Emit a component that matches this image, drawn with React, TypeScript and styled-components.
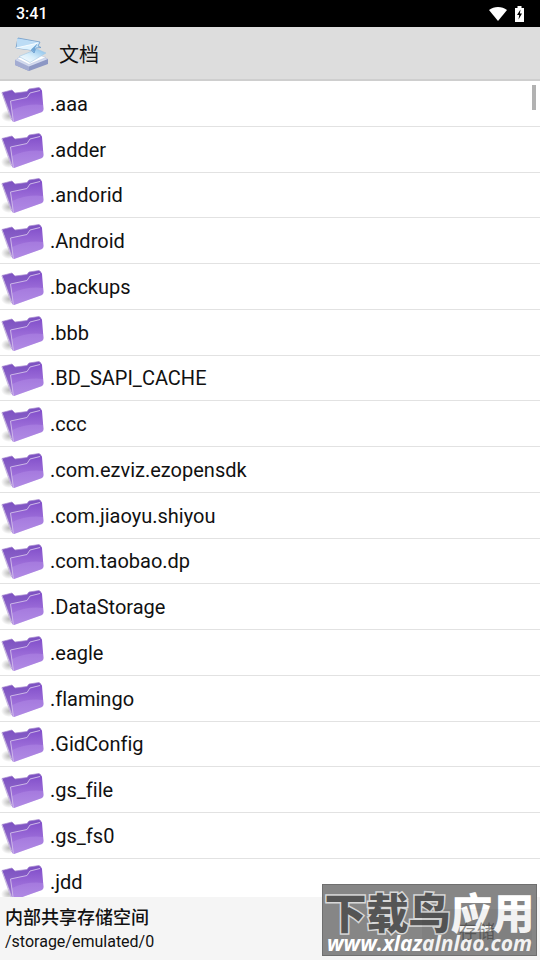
import React from "react";
import styled, { createGlobalStyle } from "styled-components";

const GlobalStyle = createGlobalStyle`
  * { box-sizing: border-box; }
  body {
    margin: 0;
    background: #fff;
    color: #111;
    font-family: Roboto, "Noto Sans CJK SC", sans-serif;
    font-variant-ligatures: none;
  }
`;

const Screen = styled.div`
  position: relative;
  display: flex;
  flex-direction: column;
  height: 100vh;
  overflow: hidden;
`;

const StatusBar = styled.div`
  display: flex;
  flex: none;
  align-items: center;
  height: 27px;
  padding: 0 16px;
  background: #000;
  color: #fff;
  font-size: 16px;
  font-weight: 500;
`;

const StatusIcons = styled.div`
  display: flex;
  align-items: center;
  gap: 8px;
  margin-left: auto;
  svg { display: block; }
`;

const TitleBar = styled.header`
  display: flex;
  flex: none;
  align-items: center;
  gap: 10px;
  height: 54px;
  padding: 0 13px;
  background: #dddddd;
  border-bottom: 2px solid #cecece;
`;

const Title = styled.h1`
  margin: 0;
  padding-top: 4px;
  font-size: 20px;
  line-height: 28px;
  font-weight: 400;
`;

const ListArea = styled.main`
  position: relative;
  flex: 1;
  min-height: 0;
  overflow: hidden;
`;

const FolderList = styled.ul`
  margin: 0;
  padding: 0;
  list-style: none;
`;

const FolderRow = styled.li`
  height: 46px;
  border-bottom: 1px solid #e2e2e2;
  &:nth-child(4n + 3) { height: 45px; }
`;

const FolderButton = styled.button`
  display: flex;
  align-items: center;
  gap: 4px;
  width: 100%;
  height: 100%;
  padding: 0;
  border: 0;
  background: none;
  color: inherit;
  font: inherit;
  font-size: 20px;
  font-variant-ligatures: none;
  line-height: 24px;
  text-align: left;
  svg { flex: none; }
`;

const ScrollThumb = styled.div`
  position: absolute;
  top: 4px;
  right: 4px;
  width: 4px;
  height: 25px;
  background: #b2b2b2;
`;

const Footer = styled.footer`
  display: flex;
  flex: none;
  align-items: center;
  justify-content: space-between;
  height: 63px;
  padding: 3px 8px 0 5px;
  background: #f5f5f5;
`;

const StorageName = styled.div`
  font-size: 18px;
  line-height: 24px;
  font-weight: 500;
`;

const StoragePath = styled.div`
  font-size: 16px;
  line-height: 24px;
`;

const SaveButton = styled.button`
  position: relative;
  z-index: 1;
  width: 110px;
  height: 42px;
  border: 0;
  background: rgba(40, 40, 40, 0.06);
  color: rgba(50, 50, 50, 0.55);
  font: inherit;
  font-size: 18px;
`;

const Watermark = styled.div`
  position: absolute;
  right: 3px;
  bottom: 4px;
  width: 215px;
  height: 72px;
  padding-top: 6px;
  border: 1px solid #6f6f6f;
  background: #868686;
  color: #fff;
  text-align: center;
  white-space: nowrap;
  pointer-events: none;
`;

const WatermarkName = styled.div`
  font-family: "Noto Sans CJK SC", sans-serif;
  font-size: 42px;
  line-height: 40px;
  font-weight: 900;
`;

const Outlined = styled.span`
  color: #555;
  -webkit-text-stroke: 3px #d8d8d8;
  paint-order: stroke fill;
`;

const WatermarkUrl = styled.div`
  font-family: "Open Sans", sans-serif;
  font-size: 21px;
  line-height: 24px;
  font-weight: 700;
  font-style: italic;
`;

const WifiIcon = () => (
  <svg width="18" height="14" viewBox="0 0 18 14" aria-hidden="true">
    <path d="M9 14 0 3C5-1 13-1 18 3Z" fill="#fff" />
  </svg>
);

const BatteryIcon = () => (
  <svg width="9" height="16" viewBox="0 0 9 16" aria-hidden="true">
    <path d="M0 2H2.500V0H6.500V2H9V16H0Z" fill="#fff" />
    <path d="M5.500 3.500 2 9H4.200L3.500 13.500 7 7.500H4.900Z" fill="#000" />
  </svg>
);

const AppIcon = () => (
  <svg width="36" height="36" viewBox="0 0 36 36" aria-hidden="true">
    <defs>
      <linearGradient id="plane" x1="0" y1="0" x2="1" y2="1">
        <stop offset="0" stopColor="#a9cdf0" />
        <stop offset=".6" stopColor="#d8f0ff" />
        <stop offset="1" stopColor="#8fc3ec" />
      </linearGradient>
      <linearGradient id="sheet" x1="0" y1="1" x2="1" y2="0">
        <stop offset="0" stopColor="#fff" />
        <stop offset=".45" stopColor="#d9effb" />
        <stop offset="1" stopColor="#7fbbe8" />
      </linearGradient>
    </defs>
    <path d="M2 25 18 18 35 24V29L16 36 2 30Z" fill="#8c97c4" />
    <path d="M2 25 16 31V36L2 30Z" fill="#a3acd2" />
    <path d="M2 25 18 17 35 24 16 31.500Z" fill="#d3daee" />
    <path d="M4 23.500 18 17 33 22.500 16 29.500Z" fill="#fff" stroke="#b9c6e0" strokeWidth=".6" />
    <path d="M6 21.500 24 14 33 18 17 27.500Z" fill="url(#sheet)" stroke="#a5c7e4" strokeWidth=".6" />
    <path d="M5 3 27 7 25 11 28 12.500 23 13 21 18 18 15 3 13Z" fill="url(#plane)" stroke="#709cc9" strokeWidth=".8" strokeLinejoin="round" />
    <path d="M4 3.500 25 8 4 13Z" fill="#bcdcf5" />
    <path d="M3 13 25 8 18 15Z" fill="#dff3ff" />
    <path d="M18 14.500 25 8 22 13 22 18Z" fill="#6fa6d6" />
    <path d="M3 13 25 8" fill="none" stroke="#fff" strokeWidth=".8" />
  </svg>
);

const FolderIcon = () => (
  <svg width="46" height="40" viewBox="0 0 46 40" aria-hidden="true">
    <defs>
      <linearGradient id="folderBack" x1="0" y1="0" x2="0" y2="1">
        <stop offset="0" stopColor="#7b4fc1" />
        <stop offset="1" stopColor="#9a75d0" />
      </linearGradient>
      <linearGradient id="folderFront" x1="0" y1="0" x2="0" y2="1">
        <stop offset="0" stopColor="#824fca" />
        <stop offset=".5" stopColor="#9b6cd8" />
        <stop offset="1" stopColor="#ab83e1" />
      </linearGradient>
      <radialGradient id="folderShade">
        <stop offset="0" stopColor="#777" stopOpacity=".5" />
        <stop offset="1" stopColor="#777" stopOpacity="0" />
      </radialGradient>
    </defs>
    <ellipse cx="9" cy="32" rx="8" ry="6" fill="url(#folderShade)" />
    <path d="M2 8.500 12 6 15 9 27 7.500 29 5 39 3.500 41 5 42 27 13 37Z" fill="url(#folderBack)" stroke="#a78bd0" strokeWidth=".7" />
    <path d="M2 9 11 35 13 37" fill="none" stroke="#c6b5e0" />
    <path d="M10.500 17 27 13.500 30 9 41 6Q42 6 42 7L43.500 25Q43.500 27 42 28L14 38Q12.500 38 12 36Z" fill="url(#folderFront)" />
    <path d="M12 26Q28 19 43 21L43.500 25Q43.500 27 42 28L14 38Q12.500 38 12 36Z" fill="#c1a0ed" opacity=".3" />
    <path d="M13.500 38 10.500 17 27 13.500 30 9 40 6.500" fill="none" stroke="#cdb8e8" />
  </svg>
);

const folders = [
  ".aaa", ".adder", ".andorid", ".Android", ".backups", ".bbb",
  ".BD_SAPI_CACHE", ".ccc", ".com.ezviz.ezopensdk", ".com.jiaoyu.shiyou",
  ".com.taobao.dp", ".DataStorage", ".eagle", ".flamingo", ".GidConfig",
  ".gs_file", ".gs_fs0", ".jdd",
];

export default function App() {
  return (
    <Screen lang="zh-CN">
      <GlobalStyle />
      <StatusBar>
        <span>3:41</span>
        <StatusIcons><WifiIcon /><BatteryIcon /></StatusIcons>
      </StatusBar>
      <TitleBar><AppIcon /><Title>文档</Title></TitleBar>
      <ListArea>
        <FolderList>
          {folders.map((name) => (
            <FolderRow key={name}>
              <FolderButton type="button"><FolderIcon />{name}</FolderButton>
            </FolderRow>
          ))}
        </FolderList>
        <ScrollThumb />
      </ListArea>
      <Footer>
        <div>
          <StorageName>内部共享存储空间</StorageName>
          <StoragePath>/storage/emulated/0</StoragePath>
        </div>
        <SaveButton type="button" disabled>存储</SaveButton>
      </Footer>
      <Watermark>
        <WatermarkName><Outlined>下载鸟</Outlined>应用</WatermarkName>
        <WatermarkUrl>www.xlazalnlao.com</WatermarkUrl>
      </Watermark>
    </Screen>
  );
}
